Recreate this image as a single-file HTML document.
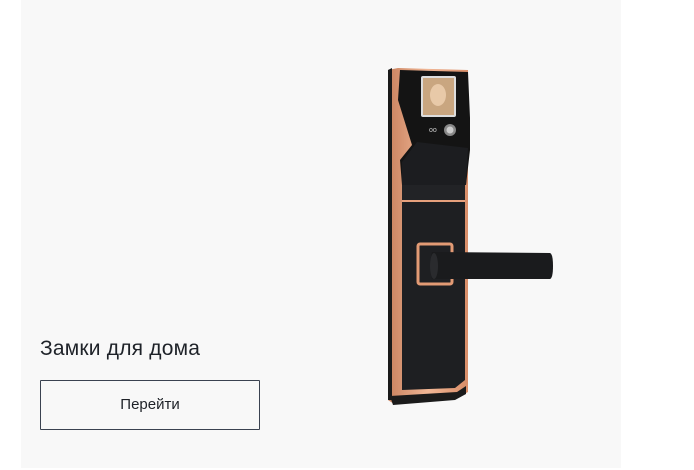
<!DOCTYPE html>
<html><head><meta charset="utf-8"><style>
html,body{margin:0;padding:0;background:#fff;width:694px;height:470px;overflow:hidden}
.card{position:absolute;left:21px;top:0;width:600px;height:468px;background:#f8f8f8}
.t{position:absolute;left:40px;top:337px;font:21px "Liberation Sans",sans-serif;color:#1e2228;letter-spacing:0.2px}
.b{position:absolute;left:40px;top:380px;border:1px solid #3a4250;box-sizing:border-box;font:15px "Liberation Sans",sans-serif;color:#1e2228;text-align:center;line-height:48px;background:#f8f8f8;border-radius:1px;width:220px;height:50px}
svg{position:absolute;left:0;top:0}
</style></head><body>
<div class="card"></div>
<div class="t">Замки для дома</div>
<div class="b">Перейти</div>
<svg width="694" height="470" viewBox="0 0 694 470">
<defs>
<linearGradient id="cu" x1="0" x2="1"><stop offset="0" stop-color="#c9825f"/><stop offset=".5" stop-color="#f1b796"/><stop offset="1" stop-color="#d98d68"/></linearGradient>
</defs>
<path d="M388 70 L398 68 L468 70 L468 392 L457 398 L394 404 L388 400 Z" fill="url(#cu)"/>
<path d="M388 70 L392 68 L392 400 L388 400Z" fill="#1a1a1a"/>
<path d="M390 396 L457 392 L466 386 L466 394 L455 400 L393 405Z" fill="#1b1b1b"/>
<path d="M402 200 L465 200 L465 380 L455 388 L402 390 Z" fill="#1e1f22"/>
<path d="M402 185 L465 185 L465 200 L402 200Z" fill="#222326"/>
<rect x="402" y="200" width="63" height="2" fill="#e6a07c"/>
<path d="M400 70 L468 72 L470 118 L470 150 L466 185 L402 185 L400 160 L412 145 L398 100 Z" fill="#141414"/>
<path d="M402 162 L417 142 L468 148 L466 185 L402 185Z" fill="#1c1d20"/>
<rect x="421" y="76" width="35" height="41" fill="#ddd" rx="2"/>
<rect x="423" y="78" width="31" height="37" fill="#c9a680"/>
<ellipse cx="438" cy="95" rx="8" ry="11" fill="#e8c9a8"/>
<circle cx="450" cy="130" r="6" fill="#888"/>
<circle cx="450" cy="130" r="3.5" fill="#ccc"/>
<text x="429" y="132" font-size="7" fill="#ccc" font-family="Liberation Sans,sans-serif">oo</text>
<rect x="418" y="244" width="34" height="40" rx="2" fill="none" stroke="#e29a74" stroke-width="3"/>
<path d="M432 252 L550 253 Q553 254 553 266 Q553 278 550 279 L432 279 Q428 266 432 252Z" fill="#1a1b1d"/>
<ellipse cx="434" cy="266" rx="4" ry="13" fill="#2a2b2e"/>
</svg>
</body></html>
